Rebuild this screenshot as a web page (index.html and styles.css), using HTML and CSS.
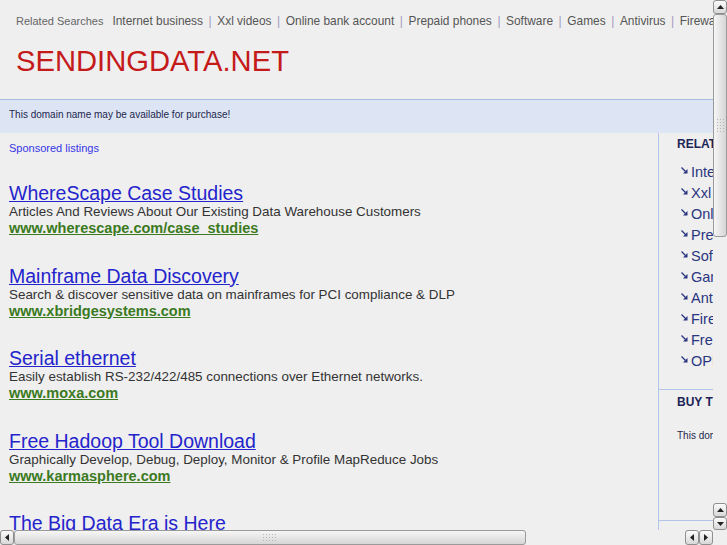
FILE: index.html
```html
<!DOCTYPE html>
<html lang="en">
<head>
    <meta charset="UTF-8">
    <meta name="viewport" content="width=device-width, initial-scale=1.0">
    <title>sendingdata.net</title>
    <link rel="stylesheet" href="styles.css">
</head>
<body>
    <div class="window">
        <div class="viewport">
            <div class="page">
                <div class="related-bar">
                    <span class="label">Related Searches</span><a href="#">Internet business</a><span class="sep">|</span><a href="#">Xxl videos</a><span class="sep">|</span><a href="#">Online bank account</a><span class="sep">|</span><a href="#">Prepaid phones</a><span class="sep">|</span><a href="#">Software</a><span class="sep">|</span><a href="#">Games</a><span class="sep">|</span><a href="#">Antivirus</a><span class="sep">|</span><a href="#">Firewall</a><span class="sep">|</span><a href="#">Free antivirus</a><span class="sep">|</span><a href="#">OPEC</a>
                </div>
                <h1 class="domain">SENDINGDATA.NET</h1>

                <div class="notice">This domain name may be available for purchase!</div>

                <div class="content">
                    <div class="listings">
                        <a class="sponsored" href="#">Sponsored listings</a>

                        <div class="ad">
                            <a class="ad-title" href="#">WhereScape Case Studies</a>
                            <div class="ad-desc">Articles And Reviews About Our Existing Data Warehouse Customers</div>
                            <a class="ad-url" href="#">www.wherescape.com/case_studies</a>
                        </div>
                        <div class="ad">
                            <a class="ad-title" href="#">Mainframe Data Discovery</a>
                            <div class="ad-desc">Search &amp; discover sensitive data on mainframes for PCI compliance &amp; DLP</div>
                            <a class="ad-url" href="#">www.xbridgesystems.com</a>
                        </div>
                        <div class="ad">
                            <a class="ad-title" href="#">Serial ethernet</a>
                            <div class="ad-desc">Easily establish RS-232/422/485 connections over Ethernet networks.</div>
                            <a class="ad-url" href="#">www.moxa.com</a>
                        </div>
                        <div class="ad">
                            <a class="ad-title" href="#">Free Hadoop Tool Download</a>
                            <div class="ad-desc">Graphically Develop, Debug, Deploy, Monitor &amp; Profile MapReduce Jobs</div>
                            <a class="ad-url" href="#">www.karmasphere.com</a>
                        </div>
                        <div class="ad">
                            <a class="ad-title" href="#">The Big Data Era is Here</a>
                            <div class="ad-desc">Analytics for the massive amounts of data your business collects</div>
                            <a class="ad-url" href="#">www.bigdata-analytics.com</a>
                        </div>
                    </div>

                    <div class="sidebar">
                        <div class="side-box">
                            <h3>RELATED SEARCHES</h3>
                            <ul class="side-links">
                                <li><svg width="7" height="7" viewBox="0 0 7 7"><path d="M0.5 0.5 L4.5 4.5" stroke="#2a3580" stroke-width="1.3"/><path d="M6.5 2 L6.5 6.5 L2 6.5 Z" fill="#2a3580"/></svg><a href="#">Internet business</a></li>
                                <li><svg width="7" height="7" viewBox="0 0 7 7"><path d="M0.5 0.5 L4.5 4.5" stroke="#2a3580" stroke-width="1.3"/><path d="M6.5 2 L6.5 6.5 L2 6.5 Z" fill="#2a3580"/></svg><a href="#">Xxl videos</a></li>
                                <li><svg width="7" height="7" viewBox="0 0 7 7"><path d="M0.5 0.5 L4.5 4.5" stroke="#2a3580" stroke-width="1.3"/><path d="M6.5 2 L6.5 6.5 L2 6.5 Z" fill="#2a3580"/></svg><a href="#">Online bank account</a></li>
                                <li><svg width="7" height="7" viewBox="0 0 7 7"><path d="M0.5 0.5 L4.5 4.5" stroke="#2a3580" stroke-width="1.3"/><path d="M6.5 2 L6.5 6.5 L2 6.5 Z" fill="#2a3580"/></svg><a href="#">Prepaid phones</a></li>
                                <li><svg width="7" height="7" viewBox="0 0 7 7"><path d="M0.5 0.5 L4.5 4.5" stroke="#2a3580" stroke-width="1.3"/><path d="M6.5 2 L6.5 6.5 L2 6.5 Z" fill="#2a3580"/></svg><a href="#">Software</a></li>
                                <li><svg width="7" height="7" viewBox="0 0 7 7"><path d="M0.5 0.5 L4.5 4.5" stroke="#2a3580" stroke-width="1.3"/><path d="M6.5 2 L6.5 6.5 L2 6.5 Z" fill="#2a3580"/></svg><a href="#">Games</a></li>
                                <li><svg width="7" height="7" viewBox="0 0 7 7"><path d="M0.5 0.5 L4.5 4.5" stroke="#2a3580" stroke-width="1.3"/><path d="M6.5 2 L6.5 6.5 L2 6.5 Z" fill="#2a3580"/></svg><a href="#">Antivirus</a></li>
                                <li><svg width="7" height="7" viewBox="0 0 7 7"><path d="M0.5 0.5 L4.5 4.5" stroke="#2a3580" stroke-width="1.3"/><path d="M6.5 2 L6.5 6.5 L2 6.5 Z" fill="#2a3580"/></svg><a href="#">Firewall</a></li>
                                <li><svg width="7" height="7" viewBox="0 0 7 7"><path d="M0.5 0.5 L4.5 4.5" stroke="#2a3580" stroke-width="1.3"/><path d="M6.5 2 L6.5 6.5 L2 6.5 Z" fill="#2a3580"/></svg><a href="#">Free antivirus</a></li>
                                <li><svg width="7" height="7" viewBox="0 0 7 7"><path d="M0.5 0.5 L4.5 4.5" stroke="#2a3580" stroke-width="1.3"/><path d="M6.5 2 L6.5 6.5 L2 6.5 Z" fill="#2a3580"/></svg><a href="#">OPEC</a></li>
                            </ul>
                        </div>
                        <div class="side-box buy-box">
                            <h3>BUY THIS DOMAIN</h3>
                            <p>This domain may be for sale by its owner!</p>
                        </div>
                    </div>
                </div>
            </div>
        </div>

        <!-- fake gtk scrollbars -->
        <div class="vscroll">
            <div class="sb-btn"><svg width="7" height="4" viewBox="0 0 7 4"><path d="M0 4 L3.5 0 L7 4 Z" fill="#222"/></svg></div>
            <div class="sb-thumb thumb-v"><span class="grip grip-v"></span></div>
            <div class="sb-trough"></div>
            <div class="sb-btn"><svg width="7" height="4" viewBox="0 0 7 4"><path d="M0 4 L3.5 0 L7 4 Z" fill="#222"/></svg></div>
            <div class="sb-btn short"><svg width="7" height="4" viewBox="0 0 7 4"><path d="M0 0 L3.5 4 L7 0 Z" fill="#222"/></svg></div>
        </div>
        <div class="hscroll">
            <div class="sb-btn"><svg width="4" height="7" viewBox="0 0 4 7"><path d="M4 0 L0 3.5 L4 7 Z" fill="#222"/></svg></div>
            <div class="sb-thumb thumb-h"><span class="grip grip-h"></span></div>
            <div class="sb-trough"></div>
            <div class="sb-btn"><svg width="4" height="7" viewBox="0 0 4 7"><path d="M4 0 L0 3.5 L4 7 Z" fill="#222"/></svg></div>
            <div class="sb-btn"><svg width="4" height="7" viewBox="0 0 4 7"><path d="M0 0 L4 3.5 L0 7 Z" fill="#222"/></svg></div>
        </div>
        <div class="corner"></div>
    </div>
</body>
</html>
```

FILE: styles.css
```css
html, body {
    margin: 0;
    padding: 0;
    height: 100%;
    overflow: hidden;
}

body {
    font-family: "Liberation Sans", Arial, sans-serif;
    background-color: #efefef;
}

.window {
    display: grid;
    grid-template-columns: 713px 14px;
    grid-template-rows: 530px 15px;
    width: 727px;
    height: 545px;
}

.viewport {
    overflow: hidden;
}

.page {
    width: 920px;
}

/* top bar */
.related-bar {
    padding: 13px 0 0 16px;
    white-space: nowrap;
    font-size: 11.9px;
    line-height: 16px;
    color: #555;
}

.related-bar .label {
    font-size: 11px;
    color: #666;
    margin-right: 9px;
}

.related-bar a {
    color: #555;
    text-decoration: none;
}

.related-bar .sep {
    color: #a39bbf;
    margin: 0 5.6px;
}

.domain {
    margin: 15px 0 21px 16px;
    font-size: 29.2px;
    line-height: 34px;
    font-weight: normal;
    color: #c41a1a;
}

.notice {
    border-top: 1px solid #a9bbe3;
    background-color: #dde5f5;
    padding: 9px 9px 12px;
    font-size: 10px;
    line-height: 12px;
    color: #22264d;
}

/* main area */
.content {
    display: flex;
}

.listings {
    width: 649px;
    padding: 9px 0 0 9px;
}

.sponsored {
    display: block;
    font-size: 11px;
    line-height: 13px;
    color: #3535e6;
    text-decoration: none;
    margin-bottom: 28px;
}

.ad {
    margin-bottom: 28.5px;
}

.ad-title {
    display: block;
    font-size: 19.5px;
    line-height: 21px;
    color: #2424cc;
    text-decoration: underline;
}

.ad-desc {
    font-size: 13.4px;
    line-height: 16px;
    color: #333;
}

.ad-url {
    display: block;
    font-size: 14.5px;
    line-height: 17px;
    font-weight: bold;
    color: #3b7a1e;
    text-decoration: underline;
}

/* right column */
.sidebar {
    width: 230px;
    border-left: 1px solid #b3c3ea;
}

.side-box {
    border-bottom: 1px solid #b3c3ea;
    padding: 4px 0 17px 18px;
}

.side-box h3 {
    margin: 0;
    font-size: 12px;
    line-height: 14px;
    color: #1c2456;
}

.side-links {
    list-style: none;
    margin: 11px 0 0 0;
    padding: 0 0 0 4px;
}

.side-links li {
    display: flex;
    align-items: center;
    gap: 3px;
    height: 21px;
    white-space: nowrap;
}

.side-links svg {
    margin-top: -4px;
}

.side-links a {
    font-size: 14.5px;
    line-height: 21px;
    color: #2a3580;
    text-decoration: none;
}

.buy-box {
    padding-top: 5px;
    height: 108px;
}

.buy-box p {
    margin: 21px 0 0 0;
    font-size: 10px;
    line-height: 12px;
    color: #22264d;
}

/* scrollbars */
.vscroll,
.hscroll {
    display: flex;
    background-color: #ececec;
}

.vscroll {
    flex-direction: column;
}

.sb-btn {
    flex: none;
    width: 14px;
    height: 14px;
    box-sizing: border-box;
    display: flex;
    align-items: center;
    justify-content: center;
    border: 1px solid #8f8f8f;
    border-radius: 3px;
    background: linear-gradient(#fbfbfb, #d8d8d8);
}

.vscroll .sb-btn.short {
    height: 13px;
}

.hscroll .sb-btn {
    height: 15px;
}

.sb-thumb {
    flex: none;
    box-sizing: border-box;
    display: flex;
    align-items: center;
    justify-content: center;
    border: 1px solid #9a9a9a;
    border-radius: 3px;
}

.thumb-v {
    height: 223px;
    background: linear-gradient(to right, #f6f6f6, #d6d6d6);
}

.thumb-h {
    width: 512px;
    background: linear-gradient(#f6f6f6, #d6d6d6);
}

.grip {
    background-image: radial-gradient(circle, #b4b4b4 0.8px, transparent 1px);
    background-size: 3px 3px;
}

.grip-v {
    width: 9px;
    height: 16px;
}

.grip-h {
    width: 16px;
    height: 9px;
}

.sb-trough {
    flex: 1;
    background-color: #efefef;
    background-image: radial-gradient(circle, #dedede 0.5px, transparent 0.7px);
    background-size: 2px 2px;
}

.corner {
    background-color: #efefef;
}
```
